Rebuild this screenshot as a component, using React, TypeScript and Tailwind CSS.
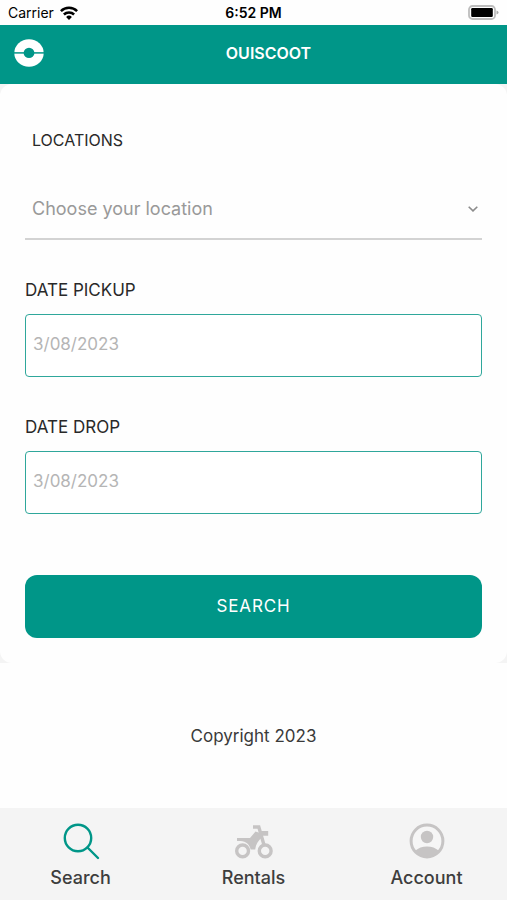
import React from "react";

function LogoIcon() {
  return (
    <svg viewBox="0 0 30 28" className="h-7 w-[30px]" aria-hidden="true">
      <ellipse cx="15" cy="14" rx="14.7" ry="13.8" fill="#fff" />
      <path d="M0 13.9H30" stroke="#009688" strokeWidth="1.5" />
      <ellipse cx="15" cy="13.9" rx="5.4" ry="5.2" fill="#009688" />
    </svg>
  );
}

function WifiIcon() {
  return (
    <svg viewBox="0 0 18 14" className="h-[14px] w-[18px]" fill="none" stroke="#000" strokeWidth="2.5" aria-hidden="true">
      <path d="M0.9 5.2a11.5 11.5 0 0 1 16.2 0" />
      <path d="M3.9 8.5a7.2 7.2 0 0 1 10.2 0" />
      <path d="M9 14 6.1 10.9a4.1 4.1 0 0 1 5.8 0Z" fill="#000" stroke="none" />
    </svg>
  );
}

function BatteryIcon() {
  return (
    <svg viewBox="0 0 31 15" className="h-[15px] w-[31px]" aria-hidden="true">
      <rect x="1" y="1" width="26" height="13" rx="3.5" fill="#fff" stroke="#bdbdbd" strokeWidth="1.8" />
      <rect x="3.2" y="3" width="21.6" height="9" rx="1.2" fill="#000" />
      <path d="M28.5 5.5c2.8 1 2.8 3 0 4Z" fill="#aaa" />
    </svg>
  );
}

function SearchIcon() {
  return (
    <svg viewBox="0 0 38 38" className="size-[38px]" fill="none" stroke="#009688" strokeWidth="2.4" strokeLinecap="round" aria-hidden="true">
      <circle cx="16" cy="16" r="13.2" />
      <path d="M25.5 25.5 36 36" />
    </svg>
  );
}

function MotorbikeIcon() {
  return (
    <svg viewBox="0 0 38 38" className="size-[38px]" aria-hidden="true">
      <g fill="none" stroke="#c6c4c4" strokeWidth="3.4">
        <circle cx="7.6" cy="28.9" r="5.9" />
        <circle cx="30.2" cy="28.900" r="5.9" />
        <path d="M18 5h5.800L29 23" />
      </g>
      <path
        d="M25 9h8.200v4.800h-6.800Z M2 15.900h13l5.500-6.400 4.500 1.500 1.800 4.400c-3.600 3.300-6 6.600-6.600 12h-4.600C14.800 23 11 19.400 5.500 19.100H2Z"
        fill="#c6c4c4"
      />
    </svg>
  );
}

function AccountIcon() {
  return (
    <svg viewBox="0 0 38 38" className="size-[38px]" aria-hidden="true">
      <circle cx="19" cy="19" r="15.9" fill="#f6f6f6" stroke="#c6c4c4" strokeWidth="3" />
      <circle cx="19" cy="15" r="6.2" fill="#c6c4c4" />
      <path d="M7.2 28.8C10.3 26 14.3 24.5 19 24.5s8.7 1.5 11.8 4.3C27.8 32.8 23.8 34.7 19 34.7S10.2 32.8 7.2 28.8Z" fill="#c6c4c4" />
    </svg>
  );
}

function DateField({ id, label }: { id: string; label: string }) {
  return (
    <div className="flex flex-col gap-3">
      <label htmlFor={id} className="text-[17px] leading-6">
        {label}
      </label>
      <input
        id={id}
        type="text"
        placeholder="3/08/2023"
        className="h-[63px] w-full rounded border border-[#2fa79b] bg-white px-[7px] pb-1 text-[17px] outline-none placeholder:text-[#b5b5b5]"
      />
    </div>
  );
}

const tabs = [
  { label: "Search", Icon: SearchIcon },
  { label: "Rentals", Icon: MotorbikeIcon },
  { label: "Account", Icon: AccountIcon },
];

export default function App() {
  return (
    <div className="flex min-h-screen flex-col bg-[#fefefe] font-['Inter',sans-serif] text-[#292929]">
      <div className="grid h-[25px] grid-cols-3 items-center px-2 text-sm text-black">
        <div className="flex items-center gap-1.5">
          <span>Carrier</span>
          <WifiIcon />
        </div>
        <span className="text-center font-semibold">6:52 PM</span>
        <div className="flex justify-end">
          <BatteryIcon />
        </div>
      </div>

      <header className="grid h-[59px] grid-cols-[30px_1fr] items-center bg-[#009688] px-3.5 pb-1">
        <LogoIcon />
        <h1 className="text-center text-base font-semibold text-white">OUISCOOT</h1>
      </header>

      <main className="bg-[#f4f4f4]">
        <form className="flex flex-col rounded-xl bg-[#fefefe] px-[25px] pt-11 pb-[25px]" onSubmit={(e) => e.preventDefault()}>
          <label htmlFor="location" className="px-[7px] text-base leading-6">
            LOCATIONS
          </label>
          <div className="mt-7 mb-[38px] grid border-b-2 border-[#d3d3d3]">
            <select
              id="location"
              defaultValue=""
              className="col-start-1 row-start-1 h-[58px] w-full appearance-none bg-transparent px-[7px] text-lg text-[#999] outline-none"
            >
              <option value="">Choose your location</option>
            </select>
            <svg
              viewBox="0 0 10 6"
              className="pointer-events-none col-start-1 row-start-1 mr-1 h-1.5 w-2.5 self-center justify-self-end"
              fill="none"
              stroke="#8c8c8c"
              strokeWidth="1.6"
              aria-hidden="true"
            >
              <path d="m0.7 0.7 4.3 4.2 4.3-4.2" />
            </svg>
          </div>
          <div className="flex flex-col gap-[38px]">
            <DateField id="pickup" label="DATE PICKUP" />
            <DateField id="drop" label="DATE DROP" />
          </div>
          <button type="submit" className="mt-[61px] h-[63px] rounded-xl bg-[#009688] text-[17px] tracking-wider text-white">
            SEARCH
          </button>
        </form>
      </main>

      <footer className="flex flex-1 items-center justify-center py-6 text-[17px] leading-6 text-[#3a3a3a]">Copyright 2023</footer>

      <nav className="overflow-hidden bg-[#f4f4f4]">
        <div className="-mx-1.5 grid h-[92px] grid-cols-3">
          {tabs.map(({ label, Icon }) => (
            <button key={label} type="button" className="flex flex-col items-center gap-1 pt-3.5 text-lg leading-7 font-medium text-[#3d3d3d]">
              <Icon />
              {label}
            </button>
          ))}
        </div>
      </nav>
    </div>
  );
}
